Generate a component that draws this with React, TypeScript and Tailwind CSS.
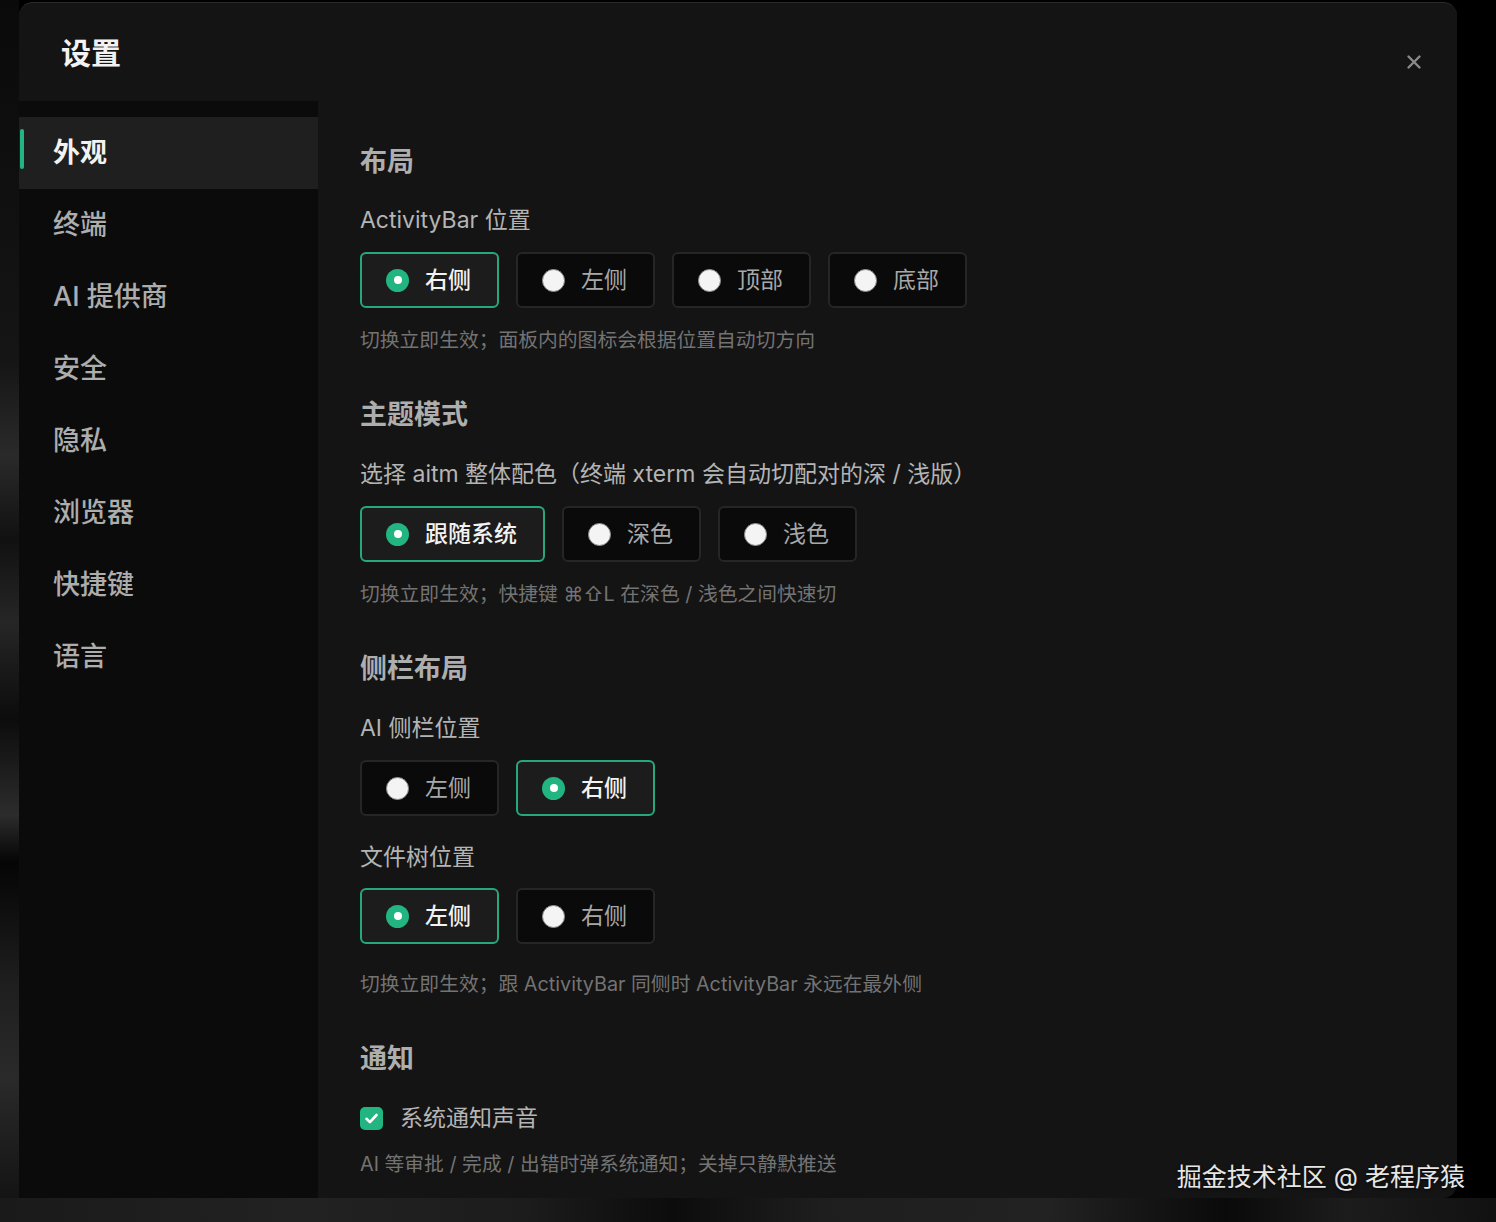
import React from "react";

const FONT = 'font-["Inter","Noto_Sans_CJK_SC",sans-serif]';

type Opt = { label: string; selected?: boolean };

function Radio({ selected }: { selected?: boolean }) {
  if (selected) {
    return (
      <span className="flex h-[23px] w-[23px] items-center justify-center rounded-full bg-[#22b582]">
        <span className="h-[8px] w-[8px] rounded-full bg-white" />
      </span>
    );
  }
  return <span className="h-[23px] w-[23px] rounded-full border border-[#8a8a8a] bg-[#f4f4f4]" />;
}

function OptionGroup({ options }: { options: Opt[] }) {
  return (
    <div className="flex gap-[17px]">
      {options.map((o) => (
        <div
          key={o.label}
          className={
            o.selected
              ? "flex h-[56px] items-center gap-[16px] rounded-[6px] border-2 border-[#27a87b] bg-[#1c1c1c] pl-[24px] pr-[26px]"
              : "flex h-[56px] items-center gap-[16px] rounded-[6px] border-2 border-[#262626] bg-[#0a0a0a] pl-[24px] pr-[26px]"
          }
        >
          <Radio selected={o.selected} />
          <span
            className={
              o.selected
                ? "text-[23px] leading-[32px] font-medium text-[#f2f2f2]"
                : "text-[23px] leading-[32px] text-[#a8a8a8]"
            }
          >
            {o.label}
          </span>
        </div>
      ))}
    </div>
  );
}

function Heading({ children, className = "" }: { children: React.ReactNode; className?: string }) {
  return <div className={"text-[27px] leading-[36px] font-semibold text-[#aeaeae] " + className}>{children}</div>;
}
function Label({ children, className = "" }: { children: React.ReactNode; className?: string }) {
  return <div className={"text-[23px] leading-[32px] text-[#b4b4b4] " + className}>{children}</div>;
}
function Help({ children, className = "" }: { children: React.ReactNode; className?: string }) {
  return <div className={"text-[19.8px] leading-[28px] text-[#737373] " + className}>{children}</div>;
}

const navItems = ["外观", "终端", "AI 提供商", "安全", "隐私", "浏览器", "快捷键", "语言"];

export default function App() {
  return (
    <div className={"relative flex h-[1222px] w-[1496px] flex-col overflow-hidden bg-black " + FONT}>
      <div className="flex h-[1198px]">
        <div className="w-[19px] bg-[linear-gradient(180deg,#0a0a0a_0%,#151515_30%,#2a2a2a_38%,#111_45%,#262626_52%,#0c0c0c_60%,#2c2c2c_68%,#050505_72%,#1e1e1e_82%,#2a2a2a_90%,#141414_100%)]" />
        <div className="mt-[2px] flex w-[1438px] flex-col overflow-hidden rounded-t-[14px] rounded-br-[14px] border-t border-[#2a2a2a] bg-[#141414]">
          <div className="flex h-[98px] items-start justify-between pl-[42px] pr-[33px]">
            <div className="mt-[31px] text-[30px] leading-[38px] font-bold text-[#f2f2f2]">设置</div>
            <div className="mt-[49px] flex h-[20px] w-[20px] items-center justify-center">
              <svg width="16" height="16" viewBox="0 0 16 16" fill="none">
                <path d="M2.5 2.5L13.5 13.5M13.5 2.5L2.5 13.5" stroke="#8a8a8a" strokeWidth="2.4" strokeLinecap="round" />
              </svg>
            </div>
          </div>
          <div className="flex flex-1">
            <div className="w-[299px] bg-[#0b0b0c] pt-[16px]">
              {navItems.map((n, i) => (
                <div
                  key={n}
                  className={
                    i === 0
                      ? "relative flex h-[72px] items-center bg-[#1f1f1f] pl-[34px]"
                      : "relative flex h-[72px] items-center pl-[34px]"
                  }
                >
                  {i === 0 && <span className="absolute left-[1px] top-[12px] h-[40px] w-[4px] rounded-full bg-[#22b582]" />}
                  <span
                    className={
                      i === 0
                        ? "text-[27px] leading-[36px] font-semibold text-[#f2f2f2]"
                        : "text-[27px] leading-[36px] font-medium text-[#adadad]"
                    }
                  >
                    {n}
                  </span>
                </div>
              ))}
            </div>
            <div className="flex-1 pl-[42px] pt-[43px]">
              <Heading>布局</Heading>
              <Label className="mt-[24px]">ActivityBar 位置</Label>
              <div className="mt-[16px]">
                <OptionGroup
                  options={[{ label: "右侧", selected: true }, { label: "左侧" }, { label: "顶部" }, { label: "底部" }]}
                />
              </div>
              <Help className="mt-[18px]">切换立即生效；面板内的图标会根据位置自动切方向</Help>

              <Heading className="mt-[43px]">主题模式</Heading>
              <Label className="mt-[25px]">选择 aitm 整体配色（终端 xterm 会自动切配对的深 / 浅版）</Label>
              <div className="mt-[16px]">
                <OptionGroup options={[{ label: "跟随系统", selected: true }, { label: "深色" }, { label: "浅色" }]} />
              </div>
              <Help className="mt-[18px]">切换立即生效；快捷键 ⌘⇧L 在深色 / 浅色之间快速切</Help>

              <Heading className="mt-[43px]">侧栏布局</Heading>
              <Label className="mt-[25px]">AI 侧栏位置</Label>
              <div className="mt-[16px]">
                <OptionGroup options={[{ label: "左侧" }, { label: "右侧", selected: true }]} />
              </div>
              <Label className="mt-[25px]">文件树位置</Label>
              <div className="mt-[15px]">
                <OptionGroup options={[{ label: "左侧", selected: true }, { label: "右侧" }]} />
              </div>
              <Help className="mt-[26px]">切换立即生效；跟 ActivityBar 同侧时 ActivityBar 永远在最外侧</Help>

              <Heading className="mt-[43px]">通知</Heading>
              <div className="mt-[25px] flex items-center gap-[17px]">
                <span className="flex h-[23px] w-[23px] items-center justify-center rounded-[5px] bg-[#22b582]">
                  <svg width="17" height="17" viewBox="0 0 16 16" fill="none">
                    <path d="M3.3 8.3L6.5 11.4L12.7 4.7" stroke="white" strokeWidth="2.5" strokeLinecap="round" strokeLinejoin="round" />
                  </svg>
                </span>
                <span className="text-[23px] leading-[32px] text-[#b4b4b4]">系统通知声音</span>
              </div>
              <Help className="mt-[16px]">AI 等审批 / 完成 / 出错时弹系统通知；关掉只静默推送</Help>
            </div>
          </div>
        </div>
        <div className="flex-1 bg-black" />
      </div>
      <div className="h-[24px] bg-[linear-gradient(90deg,#1a1a1a_0%,#222_20%,#1c1c1c_35%,#0c0c0c_45%,#1e1e1e_55%,#222_70%,#0a0a0a_82%,#1c1c1c_90%,#111_100%)]" />
      <div className="absolute right-[31px] top-[1159px] text-[25px] leading-[36px] text-[#e6e6e6] [text-shadow:0_1px_3px_rgba(0,0,0,0.8)]">
        掘金技术社区 @ 老程序猿
      </div>
    </div>
  );
}
